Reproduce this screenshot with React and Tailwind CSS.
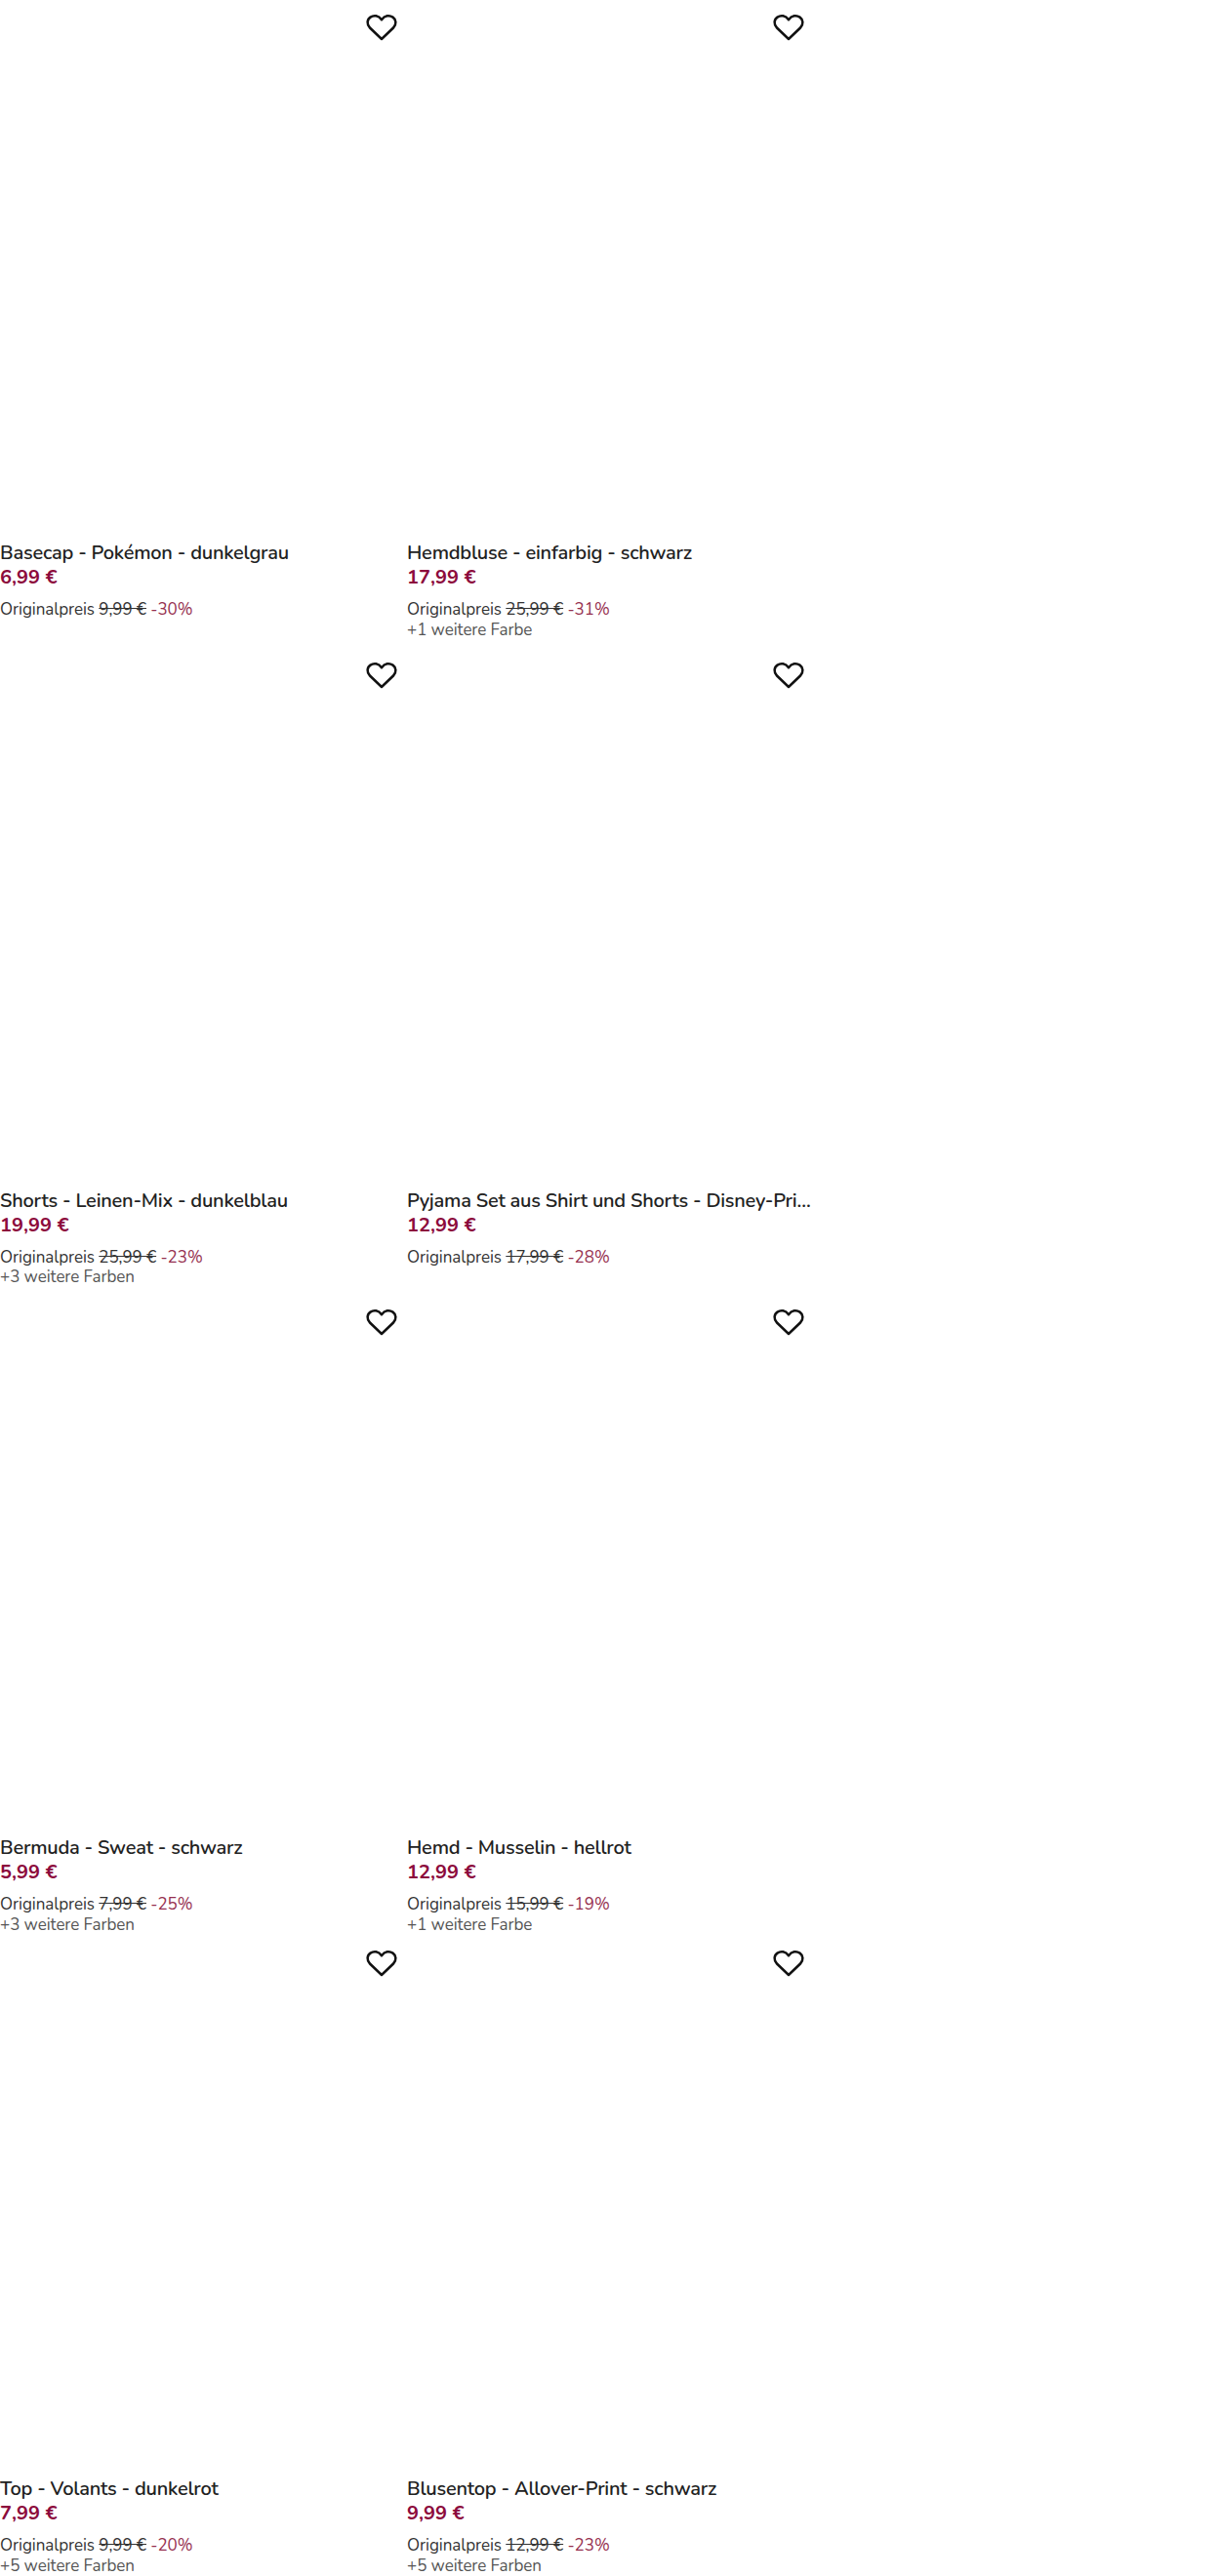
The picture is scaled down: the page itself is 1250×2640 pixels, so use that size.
import React from "react";

const products = [
  { title: "Basecap - Pokémon - dunkelgrau", price: "6,99 €", original: "9,99 €", off: "-30%" },
  { title: "Hemdbluse - einfarbig - schwarz", price: "17,99 €", original: "25,99 €", off: "-31%", more: "+1 weitere Farbe" },
  { title: "Shorts - Leinen-Mix - dunkelblau", price: "19,99 €", original: "25,99 €", off: "-23%", more: "+3 weitere Farben" },
  { title: "Pyjama Set aus Shirt und Shorts - Disney-Print - hellblau", price: "12,99 €", original: "17,99 €", off: "-28%" },
  { title: "Bermuda - Sweat - schwarz", price: "5,99 €", original: "7,99 €", off: "-25%", more: "+3 weitere Farben", tight: true },
  { title: "Hemd - Musselin - hellrot", price: "12,99 €", original: "15,99 €", off: "-19%", more: "+1 weitere Farbe", tight: true },
  { title: "Top - Volants - dunkelrot", price: "7,99 €", original: "9,99 €", off: "-20%", more: "+5 weitere Farben" },
  { title: "Blusentop - Allover-Print - schwarz", price: "9,99 €", original: "12,99 €", off: "-23%", more: "+5 weitere Farben" },
];

function Heart() {
  return (
    <svg width="32" height="28" viewBox="0 0 32 28" fill="none" stroke="#111" strokeWidth="2.5" strokeLinejoin="round">
      <path d="M16 26 L4 14.5 C0.5 11 1 6 4.5 3.6 C8 1.2 12.8 1.8 16 6.2 C19.2 1.8 24 1.2 27.5 3.6 C31 6 31.5 11 28 14.5 Z" />
    </svg>
  );
}

function Card({ item }) {
  return (
    <div className={`flex flex-col min-w-0 ${item.tight ? "pb-0" : "pb-[6.5px]"}`}>
      <div className="flex h-[554px] justify-end pt-[14px] pr-[7px]">
        <Heart />
      </div>
      <div className="truncate text-[20px] leading-[25px] font-semibold tracking-[-0.22px] text-[#222]">{item.title}</div>
      <div className="text-[20px] leading-[25px] font-bold text-[#8c0a3c]">{item.price}</div>
      <div className="mt-[11px] text-[17px] leading-[20.5px] tracking-[-0.06px] text-[#333]">
        Originalpreis <span className="line-through">{item.original}</span>{" "}
        <span className="text-[#96304f]">{item.off}</span>
      </div>
      <div className="h-[21.5px] text-[17px] leading-[20.5px] tracking-[-0.06px] text-[#555]">{item.more}</div>
    </div>
  );
}

export default function App() {
  return (
    <div className="h-[2640px] w-[1250px] overflow-hidden bg-white font-['Nunito','Lato','Open_Sans',sans-serif]">
      <div className="grid w-[831px] grid-cols-2 gap-x-[3px]">
        {products.map((item) => (
          <Card key={item.title} item={item} />
        ))}
      </div>
    </div>
  );
}
